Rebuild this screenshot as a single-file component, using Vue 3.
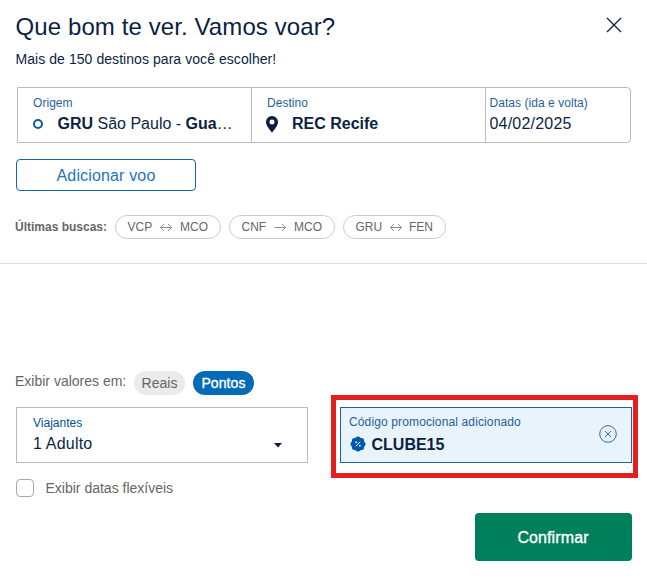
<template>
  <main class="search">
    <header class="heading">
      <div>
        <h1>Que bom te ver. Vamos voar?</h1>
        <p>Mais de 150 destinos para você escolher!</p>
      </div>
      <button class="close" aria-label="Fechar">
        <svg width="16" height="16" viewBox="0 0 16 16"><path d="M1 1l14 14M15 1L1 15" /></svg>
      </button>
    </header>

    <div class="route">
      <div class="field">
        <span class="label">Origem</span>
        <div class="value">
          <svg class="origin" width="12" height="12" viewBox="0 0 12 12"><circle cx="6" cy="6" r="4" /></svg>
          <span><b>GRU</b> São Paulo - <b>Gua</b>…</span>
        </div>
      </div>
      <div class="field">
        <span class="label">Destino</span>
        <div class="value">
          <svg class="pin" width="12" height="17" viewBox="0 0 12 17">
            <path fill-rule="evenodd" d="M6 0a6 6 0 0 0-6 6c0 3.800 3.700 7.600 6 10.800C8.300 13.600 12 9.800 12 6a6 6 0 0 0-6-6zm0 3.400a2.500 2.500 0 1 1 0 5 2.500 2.500 0 0 1 0-5z" />
          </svg>
          <b>REC Recife</b>
        </div>
      </div>
      <div class="field dates">
        <span class="label">Datas (ida e volta)</span>
        <div class="value">04/02/2025</div>
      </div>
    </div>

    <button class="add-flight">Adicionar voo</button>

    <div class="recent">
      <b>Últimas buscas:</b>
      <button v-for="item in recent" :key="item.from" class="chip" :class="item.from.toLowerCase()">
        <span>{{ item.from }}</span>
        <svg width="12" height="9" viewBox="0 0 12 9">
          <path d="M.5 4.500h11M8 1l3.500 3.500L8 8" />
          <path v-if="item.roundTrip" d="M4 1L.5 4.500 4 8" />
        </svg>
        <span>{{ item.to }}</span>
      </button>
    </div>

    <hr />

    <div class="currency">
      <span class="currency-label">Exibir valores em:</span>
      <button
        v-for="c in ['Reais', 'Pontos']"
        :key="c"
        class="pill"
        :class="{ active: currency === c }"
        @click="currency = c"
      >{{ c }}</button>
    </div>

    <div class="options">
      <div class="travellers">
        <div>
          <span class="label">Viajantes</span>
          <div class="value">1 Adulto</div>
        </div>
        <svg class="caret" width="8" height="5" viewBox="0 0 8 5"><path d="M0 0h8L4 4.600z" /></svg>
      </div>
      <div class="highlight">
        <div class="promo">
          <div>
            <span class="label">Código promocional adicionado</span>
            <div class="value">
              <svg class="badge" width="16" height="16" viewBox="0 0 16 16">
                <circle
                  v-for="n in 8"
                  :key="n"
                  :cx="8 + 5 * Math.cos(n * Math.PI / 4)"
                  :cy="8 + 5 * Math.sin(n * Math.PI / 4)"
                  r="2.5"
                  class="seal"
                />
                <circle class="seal" cx="8" cy="8" r="6.700" />
                <path class="percent" d="M10.200 5.800l-4.400 4.400" />
                <circle cx="6.200" cy="6.300" r=".9" />
                <circle cx="9.800" cy="9.700" r=".9" />
              </svg>
              <b>CLUBE15</b>
            </div>
          </div>
          <button class="remove" aria-label="Remover código">
            <svg width="18" height="18" viewBox="0 0 18 18">
              <circle cx="9" cy="9" r="8.300" />
              <path d="M6 6l6 6M12 6l-6 6" />
            </svg>
          </button>
        </div>
      </div>
    </div>

    <label class="flexible">
      <input v-model="flexible" type="checkbox" />
      <span>Exibir datas flexíveis</span>
    </label>

    <button class="confirm">Confirmar</button>
  </main>
</template>

<script setup>
import { ref } from 'vue'

const currency = ref('Pontos')
const flexible = ref(false)
const recent = [
  { from: 'VCP', to: 'MCO', roundTrip: true },
  { from: 'CNF', to: 'MCO', roundTrip: false },
  { from: 'GRU', to: 'FEN', roundTrip: true }
]
</script>

<style>
body {
  margin: 0;
  background: #fff;
}
</style>

<style scoped>
.search {
  display: flex;
  flex-direction: column;
  width: 647px;
  height: 583px;
  overflow: hidden;
  color: #0b1f44;
  font-family: "Liberation Sans", Arial, sans-serif;
}

.search * {
  box-sizing: border-box;
}

button {
  padding: 0;
  border: 0;
  background: none;
  font-family: inherit;
}

svg {
  display: block;
  flex-shrink: 0;
}

.heading {
  display: flex;
  justify-content: space-between;
  height: 87px;
  padding: 12px 25px 0 15.5px;
}

h1 {
  margin: 0;
  font-size: 24px;
  font-weight: 400;
  line-height: 30px;
  letter-spacing: 0.1px;
}

.heading p {
  margin: 9px 0 0;
  font-size: 14px;
  line-height: 16px;
  letter-spacing: 0.06px;
}

.close {
  align-self: flex-start;
  margin-top: 5px;
}

.close path {
  fill: none;
  stroke: #0b1f44;
  stroke-width: 1.3;
}

.route {
  display: grid;
  grid-template-columns: 233px 234px 1fr;
  flex-shrink: 0;
  height: 56px;
  margin: 0 16px 0 17px;
  border: 1px solid #bbb;
  border-radius: 0 4px 4px 0;
}

.field {
  padding: 7px 15px 0;
}

.field + .field {
  border-left: 1px solid #bbb;
}

.field .value {
  margin-top: 1px;
}

.field.dates {
  padding-left: 3.5px;
}

.label {
  display: block;
  color: #1f5f9c;
  font-size: 12px;
  line-height: 16px;
  letter-spacing: 0.05px;
}

.value {
  display: flex;
  align-items: center;
  height: 24px;
  font-size: 16px;
  line-height: 24px;
  white-space: nowrap;
}

.dates .value {
  letter-spacing: 0.2px;
}

.origin {
  margin: 0 13.5px 0 -1px;
  fill: none;
  stroke: #0c5a9e;
  stroke-width: 2;
}

.pin {
  margin: 0 14px 0 -1px;
  fill: #0b1f44;
}

.add-flight {
  width: 180px;
  height: 32px;
  flex-shrink: 0;
  margin: 16px 0 0 16px;
  padding-top: 1px;
  border: 1px solid #1366a8;
  border-radius: 4px;
  color: #1b76be;
  font-size: 16px;
  letter-spacing: 0.15px;
}

.recent {
  display: flex;
  align-items: center;
  height: 24px;
  margin: 24px 0 0 15px;
  color: #666;
  font-size: 12px;
}

.recent b {
  width: 100px;
}

.chip {
  display: flex;
  align-items: center;
  justify-content: space-between;
  width: 106px;
  height: 24px;
  margin-right: 8px;
  padding: 0 12px 0 11.5px;
  border: 1px solid #ccc;
  border-radius: 12px;
  color: #666;
  font-size: 12px;
}

.chip.gru {
  width: 103px;
}

.chip path {
  fill: none;
  stroke: #777;
  stroke-width: 0.8;
}

hr {
  width: 100%;
  margin: 24px 0 0;
  border: 0;
  border-top: 1px solid #dedede;
}

.currency {
  display: flex;
  height: 24px;
  margin: 107px 0 0 15px;
  color: #666;
  font-size: 14px;
}

.currency-label {
  width: 119px;
  line-height: 21px;
}

.pill {
  width: 51px;
  height: 24px;
  margin-right: 8px;
  border-radius: 12px;
  background: #ebebeb;
  color: #666;
  font-size: 14px;
}

.pill.active {
  width: 61px;
  background: #006cb7;
  color: #fff;
  letter-spacing: 0.1px;
  -webkit-text-stroke: 0.35px #fff;
}

.options {
  display: flex;
  gap: 23px;
  height: 84px;
  padding-left: 16px;
}

.travellers {
  display: flex;
  align-items: center;
  justify-content: space-between;
  width: 292px;
  height: 56px;
  margin-top: 12px;
  padding: 0 25px 0 16px;
  border: 1px solid #bbb;
}

.travellers .label {
  color: #004f8f;
  letter-spacing: 0;
}

.travellers .value {
  padding-top: 2px;
  letter-spacing: 0.2px;
}

.caret {
  margin-top: 21px;
  fill: #0b1f44;
}

.highlight {
  width: 307px;
  height: 83px;
  padding: 7px 1px 0 4px;
  border: 5px solid #e31f1f;
}

.promo {
  display: flex;
  align-items: center;
  justify-content: space-between;
  height: 56px;
  padding: 0 14px 0 8px;
  border: 1px solid #1a66a3;
  background: #e9f3fb;
}

.promo .label {
  margin-top: -1px;
  letter-spacing: 0.13px;
}

.promo .value {
  margin-top: 2px;
}

.promo b {
  padding-top: 2px;
}

.badge {
  margin: 0 5.5px 0 1px;
}

.badge circle {
  fill: #fff;
}

.badge .seal {
  fill: #0057b0;
}

.percent {
  fill: none;
  stroke: #fff;
  stroke-width: 1;
}

.remove {
  margin-top: -2px;
}

.remove circle,
.remove path {
  fill: none;
  stroke: #1b5b9d;
  stroke-width: 0.9;
}

.flexible {
  display: flex;
  align-items: center;
  height: 18px;
  margin: 0 0 0 16px;
  color: #666;
  font-size: 14px;
}

.flexible input {
  appearance: none;
  width: 18px;
  height: 18px;
  margin: 0 11.5px 0 0;
  border: 1px solid #aaa;
  border-radius: 4px;
}

.confirm {
  align-self: flex-end;
  width: 157px;
  height: 48px;
  margin: 16px 15px 0 0;
  padding: 1px 1px 0 0;
  border-radius: 4px;
  background: #00805a;
  color: #fff;
  font-size: 16px;
  letter-spacing: 0.1px;
  -webkit-text-stroke: 0.35px #fff;
}
</style>
